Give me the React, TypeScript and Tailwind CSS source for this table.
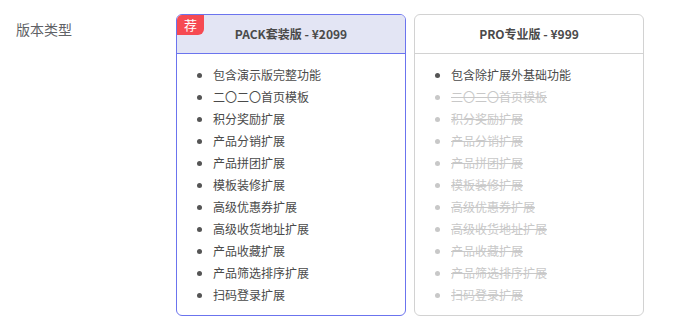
const features = [
  '二〇二〇首页模板',
  '积分奖励扩展',
  '产品分销扩展',
  '产品拼团扩展',
  '模板装修扩展',
  '高级优惠券扩展',
  '高级收货地址扩展',
  '产品收藏扩展',
  '产品筛选排序扩展',
  '扫码登录扩展',
];

function App() {
  return (
    <div
      className="flex bg-white pt-[14px] pl-4 h-screen text-[#4a4a4a]"
      style={{ fontFamily: '"Noto Sans CJK SC", "Noto Sans", sans-serif' }}
    >
      <div className="w-[160px] text-[14px] text-[#606266] mt-[5px] leading-[20px]">版本类型</div>

      <div className="flex gap-2">
        {/* PACK */}
        <div className="relative w-[230px] h-[302px] rounded-md border border-[#6b74ee] overflow-hidden">
          <div className="h-[39px] bg-[#e3e5f4] border-b border-[#6b74ee] flex items-center justify-center text-[12px] font-bold text-[#4a4a4a]">
            PACK套装版 - ¥2099
          </div>
          <span className="absolute left-0 top-0 w-[27px] h-[20px] bg-[#f64a52] text-white text-[13px] leading-[20px] text-center rounded-br-md">
            荐
          </span>
          <ul className="list-disc pl-[36px] pt-[10px] text-[12px] leading-[22px] marker:text-[#555]">
            <li>包含演示版完整功能</li>
            {features.map((f) => (
              <li key={f}>{f}</li>
            ))}
          </ul>
        </div>

        {/* PRO */}
        <div className="w-[230px] h-[302px] rounded-md border border-[#d2d2d2] overflow-hidden">
          <div className="h-[39px] border-b border-[#d2d2d2] flex items-center justify-center text-[12px] font-bold text-[#4a4a4a]">
            PRO专业版 - ¥999
          </div>
          <ul className="list-disc pl-[36px] pt-[10px] text-[12px] leading-[22px]">
            <li className="marker:text-[#555]">包含除扩展外基础功能</li>
            {features.map((f) => (
              <li key={f} className="text-[#c8c8c8] line-through">
                {f}
              </li>
            ))}
          </ul>
        </div>
      </div>
    </div>
  );
}

export default App;
